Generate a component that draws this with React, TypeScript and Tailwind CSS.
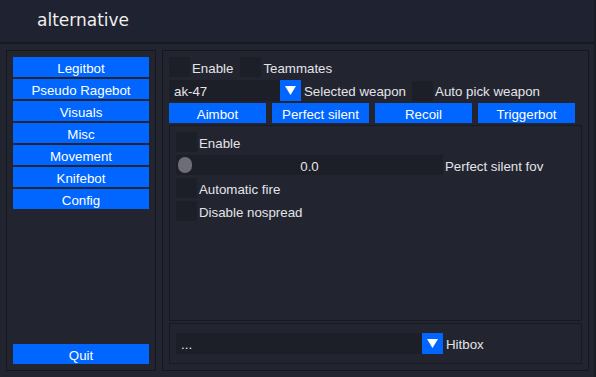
import React from 'react'

const menu = ['Legitbot', 'Pseudo Ragebot', 'Visuals', 'Misc', 'Movement', 'Knifebot', 'Config']
const tabs = ['Aimbot', 'Perfect silent', 'Recoil', 'Triggerbot']

function Check({ label }: { label: string }) {
  return (
    <div className="flex items-center h-[20px]">
      <div className="w-[21px] h-[20px] bg-[#1c1e28]" />
      <span className="ml-[2px] pt-[3px] text-[#e4e4e8]">{label}</span>
    </div>
  )
}

function Arrow() {
  return (
    <div className="w-[21px] h-[21px] bg-[#0066ff] flex items-center justify-center">
      <svg width="11" height="9" viewBox="0 0 11 9">
        <path d="M0 0h11L5.5 9z" fill="#ffffff" />
      </svg>
    </div>
  )
}

function Btn({ label, className }: { label: string; className?: string }) {
  return (
    <div
      className={`h-[20px] bg-[#0066ff] text-white flex items-center justify-center pt-[3px] ${className ?? ''}`}
    >
      {label}
    </div>
  )
}

export default function App() {
  return (
    <div
      className="w-[596px] h-[377px] bg-[#222530] flex flex-col overflow-hidden border-r-2 border-[#1a1c25] text-[13.3px]"
      style={{ fontFamily: '"Liberation Sans", Arial, sans-serif' }}
    >
      <div className="h-[44px] shrink-0 bg-[#1f2230] border-b-2 border-[#171922] flex items-center pl-[37px]">
        <span
          className="text-[17px] text-[#eeeeee]"
          style={{ fontFamily: '"DejaVu Sans", Verdana, sans-serif' }}
        >
          alternative
        </span>
      </div>

      <div className="flex gap-[6px] pt-[6px] pl-[6px]">
        {/* left menu */}
        <div className="w-[150px] h-[321px] border border-[#15171f] p-[6px] flex flex-col justify-between">
          <div className="flex flex-col gap-[2px]">
            {menu.map((m) => (
              <Btn key={m} label={m} />
            ))}
          </div>
          <Btn label="Quit" />
        </div>

        {/* right panel */}
        <div className="w-[427px] h-[321px] border border-[#15171f] p-[6px] flex flex-col text-[#e4e4e8]">
          <div className="flex items-center h-[20px] gap-[2px]">
            <Check label="Enable" />
            <div className="ml-[5px]">
              <Check label="Teammates" />
            </div>
          </div>

          <div className="flex items-center h-[21px] mt-[3px]">
            <div className="w-[111px] h-[21px] bg-[#1c1e28] flex items-center pl-[5px] pt-[3px]">ak-47</div>
            <Arrow />
            <span className="ml-[3px] pt-[3px]">Selected weapon</span>
            <div className="ml-[6px]">
              <Check label="Auto pick weapon" />
            </div>
          </div>

          <div className="flex gap-[6px] mt-[2px]">
            {tabs.map((t) => (
              <Btn key={t} label={t} className="w-[97px]" />
            ))}
          </div>

          <div className="mt-[2px] h-[196px] border border-[#181a23] p-[6px] flex flex-col gap-[3px]">
            <Check label="Enable" />
            <div className="flex items-center h-[20px]">
              <div className="relative w-[267px] h-[20px] bg-[#1c1e28] flex items-center justify-center">
                <div className="absolute left-[2px] top-[2px] w-[14px] h-[16px] rounded-[7px] bg-[#6c6d75]" />
                <span className="pt-[3px]">0.0</span>
              </div>
              <span className="ml-[2px] pt-[3px]">Perfect silent fov</span>
            </div>
            <Check label="Automatic fire" />
            <Check label="Disable nospread" />
          </div>

          <div className="mt-[2px] h-[41px] border border-[#181a23] px-[6px] flex items-center">
            <div className="w-[246px] h-[21px] bg-[#1c1e28] flex items-center pl-[5px] pt-[3px]">...</div>
            <Arrow />
            <span className="ml-[3px] pt-[3px]">Hitbox</span>
          </div>
        </div>
      </div>
    </div>
  )
}
